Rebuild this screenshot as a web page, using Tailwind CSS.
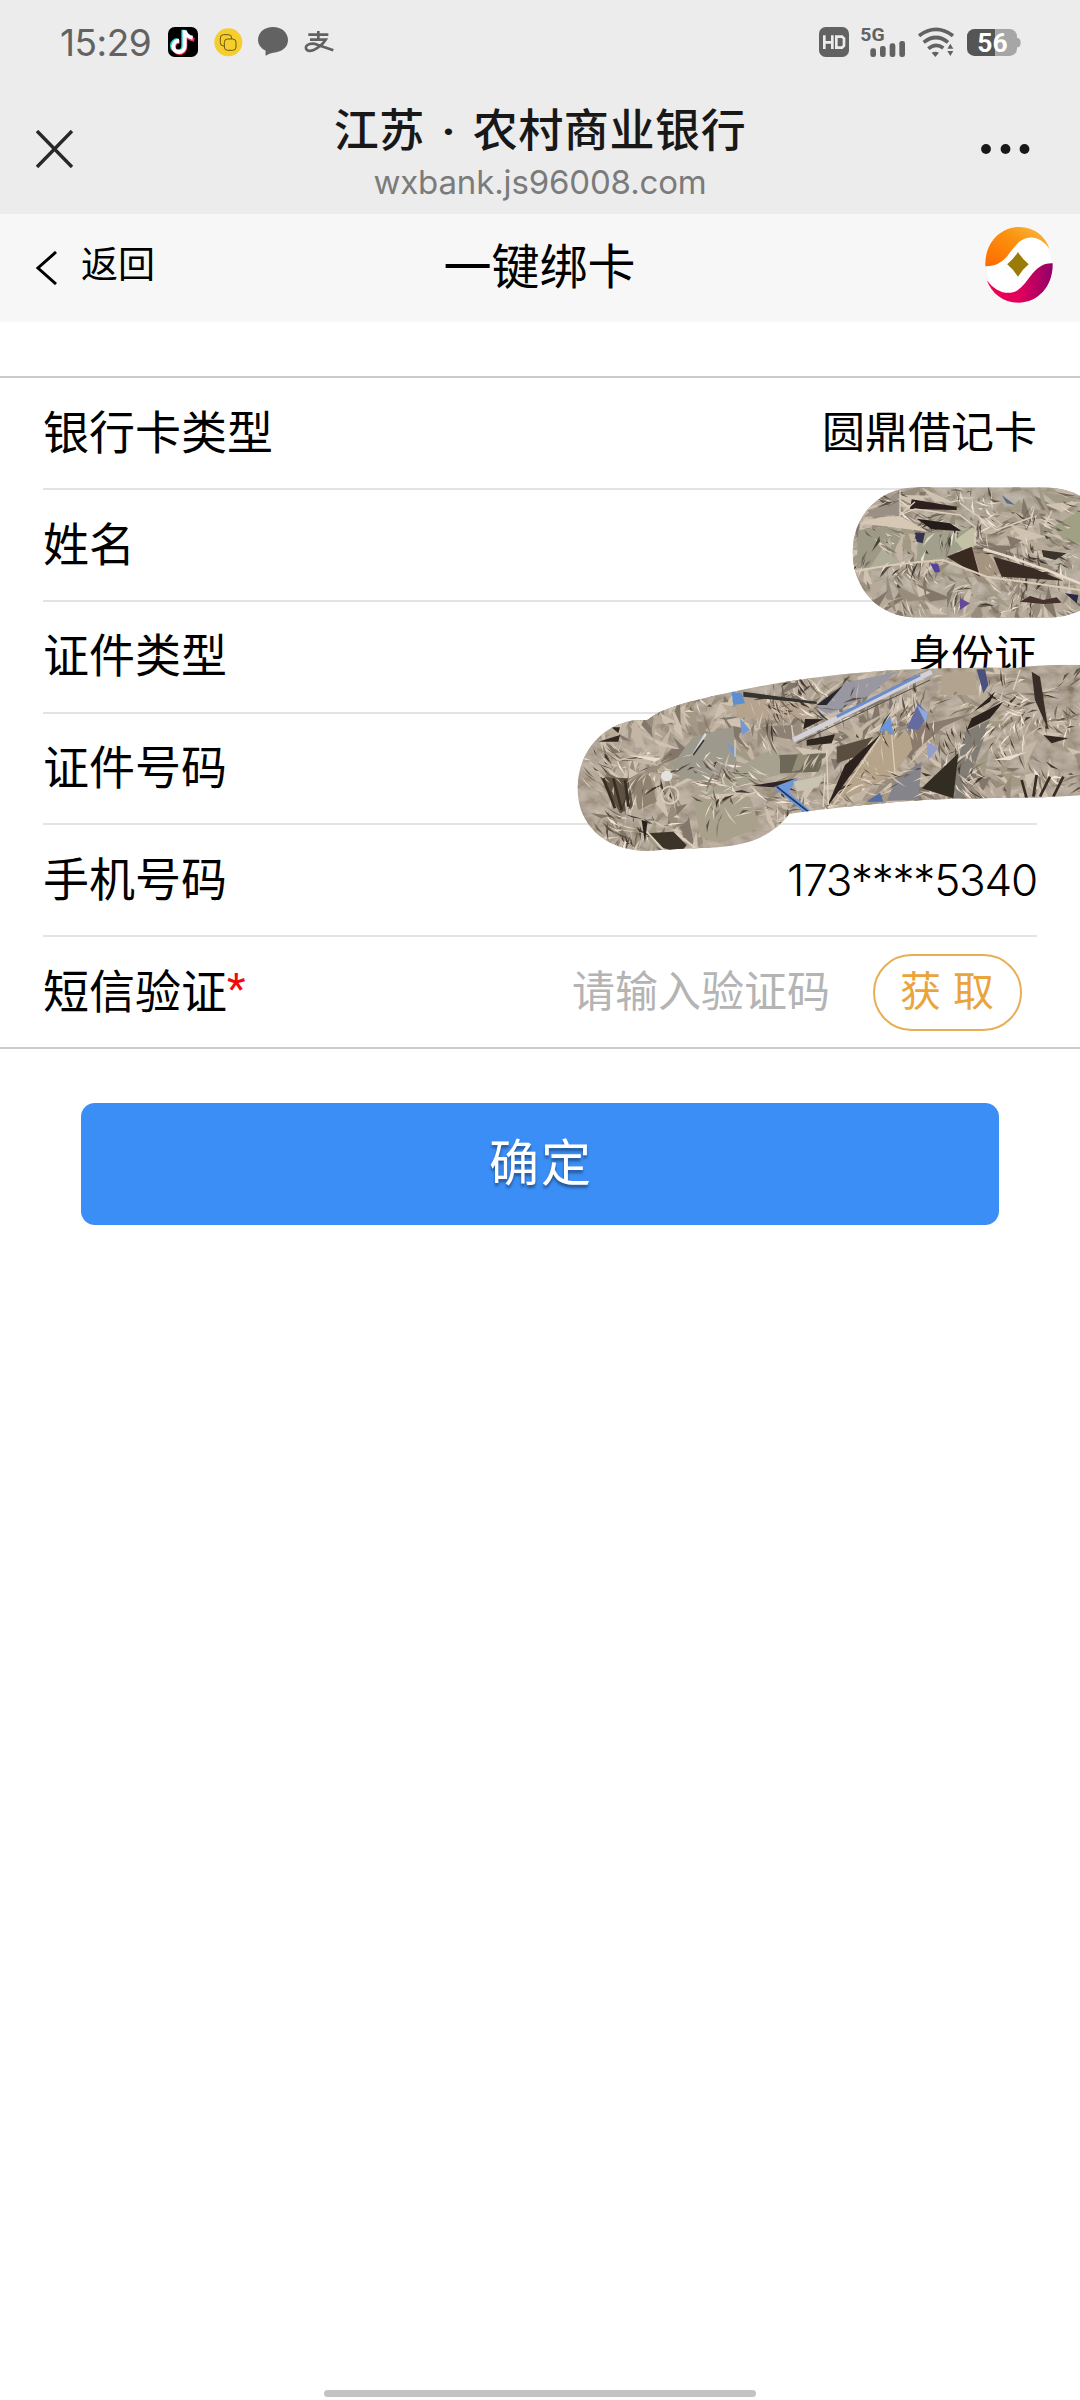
<!DOCTYPE html>
<html lang="zh-CN">
<head>
<meta charset="utf-8">
<title>一键绑卡</title>
<script src="https://cdn.jsdelivr.net/npm/@tailwindcss/browser@4"></script>
</head>
<body class="bg-white">
<div class="relative flex h-[2400px] w-[1080px] flex-col overflow-hidden bg-white font-['Roboto','Noto_Sans_CJK_SC',sans-serif] text-black">

  <!-- status bar -->
  <div class="flex h-[84px] items-center justify-between bg-[#ececec] pl-[60px] pr-[59px] text-[#626262]">
    <div class="flex h-[30px] items-center">
      <span class="w-[108px] whitespace-nowrap pt-[2px] font-['Inter',sans-serif] text-[37px] leading-[30px] tracking-[-0.5px]">15:29</span>
      <svg class="size-[30px]" viewBox="0 0 90 90"><rect width="90" height="90" rx="20" fill="#000"/>
        <g fill="none" stroke-width="12"><path d="M49 10V58A17 17 0 1 1 32 41" stroke="#25d6cf" transform="translate(-3 -2)"/><path d="M49 10V58A17 17 0 1 1 32 41M49 12Q54 32 76 35" stroke="#f0305a" transform="translate(3 3)"/><path d="M50 10V58A17 17 0 1 1 33 41M50 12Q55 29 74 32" stroke="#fff"/></g></svg>
      <svg class="ml-4 size-[29px]" viewBox="0 0 87 87"><circle cx="43" cy="43" r="42" fill="#f5cd2d"/><g stroke="#6b5813" stroke-width="3"><rect x="19" y="20" width="34" height="34" rx="10" fill="none"/><rect x="31" y="33" width="35" height="34" rx="10" fill="#f5cd2d"/></g></svg>
      <svg class="ml-[15px] size-[30px]" viewBox="0 0 90 90"><path d="M45 0C70 0 90 16 90 39S70 76 46 77Q34 78 23 86Q22 78 23 71Q0 60 0 39C0 16 20 0 45 0Z" fill="#626262"/></svg>
      <svg class="ml-[16px] h-[22px] w-[30px]" viewBox="0 0 90 66"><path d="M13 11H73M43 0V27M18 26H65Q53 44 31 56Q13 64 7 55Q2 44 17 39Q28 36 42 42L88 58" fill="none" stroke="#626262" stroke-width="8"/></svg>
    </div>
    <div class="flex h-[30px] items-center">
      <svg class="size-[30px]" viewBox="0 0 90 90"><rect width="90" height="90" rx="20" fill="#626262"/><path d="M16 25V66M40 25V66M16 46H40M52 29H69L75 35V56L69 62H52Z" fill="none" stroke="#ececec" stroke-width="8"/></svg>
      <svg class="ml-3 h-[30px] w-[45px] overflow-visible" viewBox="0 0 135 90"><text x="-2" y="43" font-size="57" font-weight="700" textLength="73" lengthAdjust="spacingAndGlyphs" fill="#626262">5G</text><g fill="#626262"><rect x="28" y="64" width="17" height="26" rx="7"/><rect x="57" y="57" width="17" height="33" rx="7"/><rect x="86" y="49" width="17" height="41" rx="7"/><rect x="115" y="42" width="17" height="48" rx="7"/></g></svg>
      <svg class="ml-[11px] h-[30px] w-[38px]" viewBox="0 0 114 90"><g fill="none" stroke="#626262" stroke-width="11"><path d="M6 26Q57-12 108 26"/><path d="M20 46Q57 17 93 46"/><path d="M34 65Q56 46 79 63"/></g><path d="M44 77Q55 71 66 77L55 90ZM100 50L109 65H91ZM100 87L109 72H91Z" fill="#626262"/></svg>
      <svg class="ml-[12px] h-[27px] w-[54px] overflow-visible" viewBox="0 0 162 81"><defs><clipPath id="cell"><rect width="150" height="81" rx="22"/></clipPath></defs><g clip-path="url(#cell)"><rect width="85" height="81" fill="#555"/><rect x="85" width="68" height="81" fill="#a6a6a6"/></g><path d="M150 26Q161 27 161 41T150 55Z" fill="#a6a6a6"/><text x="31" y="69" font-size="76" font-weight="700" textLength="91" lengthAdjust="spacingAndGlyphs" fill="#fff">56</text></svg>
    </div>
  </div>

  <!-- browser title bar -->
  <div class="flex h-[130px] items-center justify-between bg-[#ececec] pl-[36px] pr-[50px]">
    <svg class="h-[38px] w-[100px]" viewBox="0 0 100 38"><path d="M1 1L36 37M36 1L1 37" stroke="#282828" stroke-width="3.4" fill="none"/></svg>
    <div class="flex flex-col items-center pr-[37px] pt-[9px]">
      <div class="h-[56px] whitespace-nowrap text-[45px] font-medium leading-[56px] tracking-[0.6px] text-[#181818] [word-spacing:5px]">江苏 <b>·</b> 农村商业银行</div>
      <div class="h-[44px] whitespace-nowrap font-['Inter',sans-serif] text-[33px] leading-[44px] tracking-[-0.15px] text-[#7b7b7b]">wxbank.js96008.com</div>
    </div>
    <svg class="h-[10px] w-[49px]" viewBox="0 0 49 10"><g fill="#181818"><circle cx="5" cy="5" r="4.9"/><circle cx="24.5" cy="5" r="4.9"/><circle cx="43.5" cy="5" r="4.9"/></g></svg>
  </div>

  <!-- page header -->
  <div class="grid h-[108px] grid-cols-3 items-center bg-[#f7f7f7] pl-[36px] pr-[27px]">
    <div class="flex items-center gap-[24px]">
      <svg class="h-[34px] w-[21px]" viewBox="0 0 21 34"><path d="M20 1L2 17L20 33" fill="none" stroke="#000" stroke-width="3"/></svg>
      <span class="pb-[4px] text-[37px] leading-[44px]">返回</span>
    </div>
    <div class="whitespace-nowrap pr-[10px] text-center text-[48px] leading-[60px]">一键绑卡</div>
    <svg class="mb-[6px] h-[76px] w-[68px] justify-self-end" viewBox="0 0 196 226" preserveAspectRatio="none">
      <defs><linearGradient id="sun" x1="0" y1="1" x2="1" y2="0"><stop offset="0" stop-color="#ff6900"/><stop offset=".6" stop-color="#fb9410"/><stop offset="1" stop-color="#f6c04c"/></linearGradient>
      <linearGradient id="plum" x1="0" y1="0" x2="1" y2="0"><stop offset="0" stop-color="#f00050"/><stop offset=".5" stop-color="#e2005c"/><stop offset="1" stop-color="#900068"/></linearGradient></defs>
      <ellipse cx="98" cy="113" rx="94" ry="108" fill="#fff"/>
      <path d="M1 117C-2 50 42 0 100 0C142 1 172 25 186 65C165 34 136 22 108 38C72 58 65 118 1 117Z" fill="url(#sun)"/>
      <path d="M195 108C197 174 155 225 96 225C52 224 20 198 5 158C30 192 66 206 94 188C129 165 140 106 195 108Z" fill="url(#plum)"/>
      <path d="M95 74Q107 95 126 111Q107 127 95 148Q83 127 64 111Q83 95 95 74Z" fill="#9a7b05"/>
    </svg>
  </div>

  <!-- form -->
  <div class="mt-[54px] h-[673px] border-y-2 border-[#cbcbcb] px-[43px] text-[46px] leading-[60px]">
    <div class="flex h-[112px] items-center justify-between border-b-2 border-[#e3e3e3]"><span>银行卡类型</span><span class="text-[43px]">圆鼎借记卡</span></div>
    <div class="flex h-[112px] items-center justify-between border-b-2 border-[#e3e3e3]"><span>姓名</span></div>
    <div class="flex h-[112px] items-center justify-between border-b-2 border-[#e3e3e3] pb-[2px]"><span>证件类型</span><span class="text-[43px]">身份证</span></div>
    <div class="flex h-[111px] items-center justify-between border-b-2 border-[#e3e3e3] pb-[2px]"><span>证件号码</span></div>
    <div class="flex h-[112px] items-center justify-between border-b-2 border-[#e3e3e3]"><span>手机号码</span><span class="font-['Inter',sans-serif] text-[44px] font-light tracking-[-1.2px]">173****5340</span></div>
    <div class="flex h-[110px] items-center"><span>短信验证</span><span class="-mt-[8px] text-[43px] text-[#f00a0a]">*</span>
      <span class="ml-auto text-[43px] text-[#b4b4b4]">请输入验证码</span>
      <button class="ml-[43px] mr-[15px] flex h-[77px] w-[149px] items-center justify-center rounded-full border-2 border-[#e8ae55] text-[41px] text-[#eaa43c]"><span class="whitespace-pre tracking-[1px]">获 取</span></button>
    </div>
  </div>
  <button class="mx-[81px] mt-[54px] flex h-[122px] items-center justify-center rounded-[14px] bg-[#3b8ef5] pl-[2px] text-[50px] leading-[60px] tracking-[2px] text-white [text-shadow:0_3px_3px_rgba(0,0,0,0.4)]">确定</button>

  <div class="mx-auto mb-[3px] mt-auto h-[7px] w-[432px] rounded-full bg-[#c3c3c3]"></div>

  <!-- foil strips laid over the private fields -->
  <svg class="absolute left-[800px] top-[360px] h-[320px] w-[280px]" viewBox="0 0 840 960">
    <defs>
      <clipPath id="pill"><path d="M350 382H740Q800 385 840 408V752Q800 770 750 773H350C240 773 158 690 158 577C158 465 240 382 350 382Z"/></clipPath>
      <filter id="crinkle" x="0" y="0" width="100%" height="100%"><feTurbulence type="fractalNoise" baseFrequency=".02 .03" numOctaves="4" seed="8"/><feColorMatrix values="1.6 0 0 0 -.25  1.6 0 0 0 -.29  1.6 0 0 0 -.34  0 0 0 0 1"/></filter>
    </defs>
    <g clip-path="url(#pill)">
      <path d="M150 370H840V780H150Z" fill="#aaa090"/>
      <path d="M150 370H840V780H150Z" filter="url(#crinkle)" opacity=".25"/>
      <g id="folds-a"></g>
      <path d="M175 510L255 500L300 520L270 620L170 625Z" fill="#9c9a86"/>
      <path d="M355 520L510 510L520 555L430 590L350 610Z" fill="#a1a08c"/>
      <path d="M205 630L270 530L280 610Z" fill="#b0ad98"/>
      <path d="M190 470L300 390L300 465Z" fill="#9b9085"/>
      <path d="M515 560L560 575L605 640L545 655Z" fill="#a49480"/>
      <path d="M760 500L840 450V550L790 540Z" fill="#a0a084"/>
      <g id="glints-a"></g>
      <path d="M465 540L520 500L530 556L490 570Z" fill="#c4c2a6"/>
      <path d="M335 418L470 440L470 450L330 447Z" fill="#2b201d"/>
      <path d="M350 476L450 490L485 513L395 508Z" fill="#241c18"/>
      <path d="M175 490L240 472L300 468L385 515L240 497Z" fill="#d7c8b6"/>
      <path d="M440 590L515 560L540 650Z" fill="#392a21"/>
      <path d="M580 590L700 625L790 662L680 655L605 650Z" fill="#3b2b25"/>
      <path d="M550 567Q700 610 840 670" stroke="#eadaca" stroke-width="8" fill="none"/>
      <path d="M725 570L800 580L765 600L730 590Z" fill="#3a342a"/>
      <path d="M160 635Q280 610 430 600L560 650L840 690" stroke="#dccbb6" stroke-width="6" fill="none"/>
      <path d="M300 390V465L345 425M480 430L590 510L700 470M300 465L345 447L480 465L525 500V550" stroke="#ddd0c1" stroke-width="4" fill="none"/>
      <path d="M215 575L238 528L240 545Z" fill="#45423a"/>
      <path d="M345 518L375 518L368 550L350 545Z" fill="#36314e"/><path d="M390 610L415 612L420 635L405 638Z" fill="#54439a"/><path d="M480 715L510 730L480 750Z" fill="#65489a"/><path d="M795 700L835 705L830 730Z" fill="#29264a"/>
      <path d="M660 725L690 708L730 720L770 712L785 728L730 732Z" fill="#44312b"/><path d="M605 405L645 435L620 430Z" fill="#596b8b"/>
    </g>
  </svg>
  <svg class="absolute left-[560px] top-[640px] h-[220px] w-[520px]" viewBox="0 0 1560 660">
    <defs><clipPath id="swipe"><path d="M53 440C55 340 120 260 215 242L262 240C300 210 350 195 420 178C600 135 750 110 900 98C1050 85 1250 82 1370 84C1420 75 1500 74 1560 74V466C1400 478 1250 470 1060 482C950 490 800 505 688 521C650 570 600 600 540 612C470 628 400 622 260 633C130 630 50 550 53 440Z"/></clipPath></defs>
    <g clip-path="url(#swipe)">
      <path d="M40 60H1560V650H40Z" fill="#aa9d8d"/>
      <path d="M40 60H1560V650H40Z" filter="url(#crinkle)" opacity=".25"/>
      <g id="folds-b"></g>
      <path d="M340 370L400 290L520 260L530 370L430 430L340 400Z" fill="#9d9a8d"/>
      <path d="M520 390L650 320L670 400L560 430L430 470Z" fill="#a7a28f"/>
      <path d="M400 480L570 470L600 560L480 610L420 590Z" fill="#aaa18c"/>
      <path d="M525 160L770 195L740 235L530 235Z" fill="#b5a38e"/>
      <path d="M770 205L850 130L1010 95L930 165L780 235Z" fill="#9998a2"/>
      <path d="M600 260L700 255L700 300L620 285Z" fill="#8f8075"/>
      <path d="M660 345L800 340L775 395L660 400Z" fill="#6d6858"/>
      <path d="M960 285L1035 280L1070 310L1000 405L810 500Z" fill="#b5a38a"/>
      <path d="M1145 100L1240 95L1255 165L1140 165Z" fill="#b1a38e"/>
      <path d="M1045 265L1240 220L1150 260L1060 340Z" fill="#8a7b6e"/>
      <path d="M1215 275L1290 240L1210 475L1165 475Z" fill="#817d74"/>
      <path d="M1010 415L1085 365L1075 480L980 483Z" fill="#85848a"/>
      <path d="M120 410L205 415L220 500L180 520Z" fill="#5d5142"/><path d="M205 415L270 405L290 485L235 510Z" fill="#8f8270"/>
      <g id="glints-b"></g>
      <path d="M515 155L545 160L555 190L520 195Z" fill="#5d8ed4"/>
      <path d="M550 155L770 185L770 192L550 170Z" fill="#353330"/>
      <path d="M770 195L850 135L800 195Z" fill="#25272d"/>
      <path d="M735 237L790 238L730 268Z" fill="#2b211e"/>
      <path d="M700 300L1115 95" stroke="#d3d2d8" stroke-width="15"/><path d="M830 230L1080 105" stroke="#6c8dcc" stroke-width="9"/><path d="M710 310L1110 120" stroke="#554c47" stroke-width="3"/>
      <path d="M740 300L825 283L815 310L740 317Z" fill="#302720"/>
      <path d="M540 235L570 270L545 285ZM500 310L525 325V355Z" fill="#7498d2"/>
      <path d="M395 345L435 278L440 285Z" fill="#d8dce0"/><path d="M400 345L432 300" stroke="#303330" stroke-width="4"/>
      <path d="M715 340L745 345L720 390L695 395Z" fill="#948e78"/>
      <path d="M705 320L800 335L730 345Z" fill="#d1c4b1"/>
      <path d="M830 320L940 290L900 345L830 370Z" fill="#5a4e40"/>
      <path d="M855 375L960 285L800 503Z" fill="#2c211d"/>
      <path d="M960 290L815 503M995 285L1005 400" stroke="#dccdb8" stroke-width="4"/>
      <path d="M955 275L990 228L1000 285L980 270Z" fill="#6896de"/><path d="M1040 265L1075 190L1105 225L1075 270Z" fill="#646ba0"/><path d="M1070 195L1105 222L1095 245Z" fill="#8cabdc"/>
      <path d="M1100 305L1135 325L1105 360Z" fill="#959ecb"/>
      <path d="M1250 88L1275 88L1285 135L1270 160Z" fill="#4b517e"/>
      <path d="M1240 215L1305 155L1290 185ZM1220 270L1235 235L1330 185L1290 235Z" fill="#2b211d"/>
      <path d="M1105 425L1195 340L1180 475L1085 445Z" fill="#322d22"/>
      <path d="M1415 95L1440 110L1465 270L1425 180Z" fill="#382e27"/>
      <path d="M1450 285L1525 295L1475 310Z" fill="#30271f"/>
      <path d="M640 440L715 415L685 455L755 515H730Z" fill="#6a98da"/><path d="M650 440L700 480L745 515" stroke="#27365b" stroke-width="5" fill="none"/>
      <path d="M700 425L795 405L775 440L710 455Z" fill="#c9c3b1"/><path d="M920 485L960 458L970 485Z" fill="#536ea8"/>
      <path d="M575 437L650 425L710 415L640 442Z" fill="#302524"/>
      <path d="M115 305L180 285L175 305ZM155 262L180 262L175 280Z" fill="#33281f"/>
      <path d="M260 580L340 575L380 615L360 640L300 620Z" fill="#3c3428"/><path d="M245 540L262 545L255 610Z" fill="#28231a"/>
      <path d="M260 575L320 640M350 580L420 635" stroke="#ddd1bf" stroke-width="6"/>
      <ellipse cx="320" cy="408" rx="17" ry="16" fill="#e4e2df"/>
      <path d="M205 345L305 355L285 365ZM1300 360L1400 335L1350 360Z" fill="#e8ded6"/>
      <circle cx="330" cy="465" r="26" fill="none" stroke="#d9cfbf" stroke-width="5"/>
      <path d="M800 330L805 495M695 255L700 300M525 300V350M795 400L790 500M1380 90L1360 150" stroke="#ddd2c3" stroke-width="4"/>
      <path d="M130 415L165 505M160 415L185 510M195 420L205 500M1385 420L1400 475M1430 405L1420 470M1470 410L1440 470M1510 410L1480 470" stroke="#372d24" stroke-width="8"/>
    </g>
  </svg>
</div>
<script>
  // Creases of the foil: streaks fanned out from a handful of folds.
  let seed = 41;
  const rnd = () => (seed = (seed * 16807) % 2147483647) / 2147483647;
  const tones = ['#e6d8c9', '#f2e6da', '#5b5044', '#72675b', '#cdbfae', '#867b6c', '#3e352d', '#d8c9b8'];
  const soft = ['#c4b6a5', '#988c7d', '#b7aa99', '#82776a', '#d0c2b1', '#a39a86'];
  function creases(id, x, y, w, h, groups, palette, length, thick) {
    let out = '';
    for (let g = 0; g < groups; g++) {
      const cx = x + rnd() * w, cy = y + rnd() * h, base = rnd() * Math.PI;
      for (let i = 0; i < 8; i++) {
        const a = base + (rnd() - 0.5) * 0.6, l = length * (0.25 + rnd());
        const px = cx + (rnd() - 0.5) * length * 1.5, py = cy + (rnd() - 0.5) * length * 1.2;
        const qx = px + Math.cos(a) * l, qy = py + Math.sin(a) * l;
        const t = thick * (0.3 + rnd()), mx = (px + qx) / 2 - Math.sin(a) * t, my = (py + qy) / 2 + Math.cos(a) * t;
        out += `<path d="M${px.toFixed(0)} ${py.toFixed(0)}L${qx.toFixed(0)} ${qy.toFixed(0)}L${mx.toFixed(0)} ${my.toFixed(0)}Z" fill="${palette[Math.floor(rnd() * palette.length)]}"/>`;
      }
    }
    document.getElementById(id).innerHTML = out;
  }
  creases('folds-a', 160, 385, 680, 390, 34, soft, 110, 26);
  creases('glints-a', 160, 385, 680, 390, 52, tones, 50, 6);
  creases('folds-b', 50, 80, 1510, 550, 80, soft, 120, 26);
  creases('glints-b', 50, 80, 1510, 550, 125, tones, 58, 6);
</script>
</body>
</html>
